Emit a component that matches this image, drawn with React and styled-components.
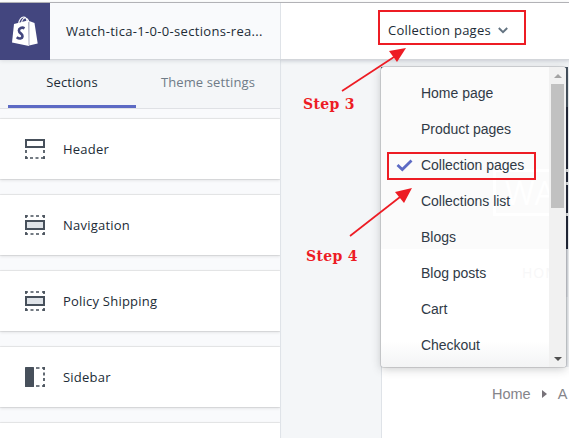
import React from "react";
import styled, { createGlobalStyle } from "styled-components";

const Global = createGlobalStyle`
  *, *::before, *::after { box-sizing: border-box; }
  body { margin: 0; background: #fff; overflow: hidden; }
`;

const Page = styled.div`
  position: relative;
  display: flex;
  flex-direction: column;
  width: 569px;
  height: 438px;
  overflow: hidden;
  background: #fff;
  color: #212b36;
  font-family: "Open Sans", "Noto Sans", sans-serif;
  font-size: 13px;
`;

const TopBar = styled.header`
  display: flex;
  flex: none;
  height: 60px;
  padding-top: 2px;
  position: relative;
  z-index: 1;
`;

const BarFill = styled.div`
  display: flex;
  width: 100%;
  border-top: 1px solid #b2b2b6;
  border-bottom: 1px solid #d3d6da;
  box-shadow: 0 1px 4px rgba(33, 43, 54, 0.12);
`;

const Brand = styled.div`
  width: 50px;
  height: 57px;
  margin-bottom: -1px;
  flex: none;
  background: #43467f;
  padding: 13px 0 0 12px;
  svg { display: block; }
`;

const ThemeName = styled.div`
  width: 231px;
  flex: none;
  padding-left: 16px;
  line-height: 56px;
  background: #f9fafc;
  border-right: 1px solid #dfe3e8;
  white-space: nowrap;
  letter-spacing: 0.32px;
`;

const PagePicker = styled.div`
  flex: 1;
  display: flex;
  align-items: center;
  padding: 0 0 2px 107px;
  gap: 7px;
  background: #fff;
  letter-spacing: 0.25px;
  white-space: nowrap;
`;

const Body = styled.div`
  display: flex;
  flex: 1;
  min-height: 0;
`;

const Sidebar = styled.aside`
  width: 281px;
  flex: none;
  border-right: 1px solid #dfe3e8;
  background: #f9fafc;
  overflow: hidden;
`;

const Tabs = styled.nav`
  display: flex;
  height: 49px;
  padding: 0 8px;
  background: #f4f6f8;
  border-bottom: 1px solid #dfe1e5;
`;

const Tab = styled.div`
  width: 128px;
  height: 48px;
  line-height: 44px;
  text-align: center;
  white-space: nowrap;
  color: ${(p) => (p.$active ? "#212b36" : "#6f7b87")};
  border-bottom: 3px solid ${(p) => (p.$active ? "#5c6ac4" : "transparent")};
  letter-spacing: 0.13px;
  padding-left: ${(p) => p.$shift || 0}px;
`;

const SectionList = styled.div`
  display: flex;
  flex-direction: column;
  gap: 16px;
  padding-top: 10px;
`;

const SectionCard = styled.div`
  display: flex;
  align-items: center;
  gap: 18px;
  flex: none;
  height: 60px;
  padding-left: 25px;
  background: #fff;
  box-shadow: 0 0 0 1px rgba(63, 63, 68, 0.09), 0 1px 3px rgba(63, 63, 68, 0.17);
  letter-spacing: 0.22px;
  white-space: nowrap;
`;

const Canvas = styled.main`
  flex: 1;
  padding-left: 100px;
  background: #f4f6f8;
  box-shadow: inset 0 4px 4px -3px #dfe3e8;
`;

const Preview = styled.div`
  display: flex;
  flex-direction: column;
  height: 100%;
  padding-top: 7px;
`;

const Hero = styled.div`
  display: flex;
  flex-direction: column;
  height: 182px;
  width: 187px;
  background: #1f2537;
`;

const HeroTop = styled.div`
  height: 40px;
  background: #485562;
`;

const HeroStripe = styled.div`
  height: 3px;
  margin-top: ${(p) => p.$gap}px;
  background: #e8e9eb;
`;

const NavBand = styled.div`
  height: 118px;
  width: 187px;
  background: #e8ebef;
  border-top: 48px solid #dcdfe5;
`;

const Breadcrumb = styled.div`
  display: flex;
  align-items: center;
  gap: 11px;
  flex: 1;
  padding: 0 0 18px 110px;
  border-left: 1px solid #dfe3e8;
  background: #fff;
  color: #85848a;
  font: 14.5px "Liberation Sans", sans-serif;
`;

const Menu = styled.div`
  position: absolute;
  z-index: 2;
  left: 381px;
  top: 67px;
  width: 185px;
  height: 300px;
  display: flex;
  overflow: hidden;
  border-radius: 3px;
  background: linear-gradient(#fbfbfb 182px, #fff 182px, #fff 274px, #f3f4f5);
`;

const MenuShadow = styled.div`
  position: absolute;
  left: 381px;
  top: 67px;
  width: 185px;
  height: 300px;
  border-radius: 3px;
  box-shadow: 0 0 0 1px rgba(39, 44, 48, 0.14), 0 2px 10px rgba(39, 44, 48, 0.25);
`;

const GhostLogo = styled.div`
  position: absolute;
  left: 112px;
  top: 102px;
  width: 100px;
  height: 47px;
  padding-left: 9px;
  border: 3px solid #fff;
  color: #fff;
  font: 32px/42px "Open Sans", sans-serif;
`;

const GhostNav = styled.div`
  position: absolute;
  left: 141px;
  top: 198px;
  color: #f7f7f8;
  font: 14px/16px "Open Sans", sans-serif;
  letter-spacing: 1px;
`;

const MenuItems = styled.div`
  position: relative;
  flex: 1;
  padding-top: 8px;
`;

const MenuItem = styled.div`
  display: flex;
  align-items: center;
  height: 36px;
  color: #303a46;
  font: 14px "Liberation Sans", sans-serif;
  letter-spacing: -0.02px;
  white-space: nowrap;
`;

const CheckSlot = styled.span`
  display: flex;
  width: 40px;
  padding-left: 15px;
`;

const Scrollbar = styled.div`
  position: relative;
  display: flex;
  flex-direction: column;
  justify-content: space-between;
  align-items: center;
  width: 17px;
  background: #f1f1f1;
`;

const Thumb = styled.div`
  width: 13px;
  height: 124px;
  margin-bottom: auto;
  background: #c1c1c1;
`;

const ScrollButton = styled.div`
  display: flex;
  align-items: center;
  justify-content: center;
  height: 17px;
`;

const Highlight = styled.div`
  position: absolute;
  z-index: 3;
  left: ${(p) => p.$x}px;
  top: ${(p) => p.$y}px;
  width: ${(p) => p.$w}px;
  height: ${(p) => p.$h}px;
  border: 2px solid #ed1c24;
`;

const Step = styled.div`
  position: absolute;
  z-index: 3;
  left: ${(p) => p.$x}px;
  top: ${(p) => p.$y}px;
  color: #ed1c24;
  font: bold 14px/18px "DejaVu Serif", serif;
  letter-spacing: 0.3px;
  white-space: nowrap;
`;

const Arrows = styled.svg`
  position: absolute;
  z-index: 3;
  left: 0;
  top: 0;
`;

function BagLogo() {
  return (
    <svg width="26" height="31" viewBox="0 0 26 31">
      <path d="M2 8L16.500 4.300L17 30L0 26.500Z" fill="#fff" />
      <path d="M17.200 5L22.500 7L25.700 27.500L17.200 29.500Z" fill="#fff" />
      <path d="M16.800 5V29.500" stroke="#b9b9cb" strokeWidth=".7" />
      <path d="M6.500 8C7 3.500 9.500 1 11.500 1C14 1 15 3.500 15 6M9.500 7C10 3.500 12 1.500 13.500 2C15.500 2.200 16.300 4 16.800 6" fill="none" stroke="#fff" strokeWidth="1.100" />
      <path d="M12.500 12.300C10 10.900 6.900 12 6.900 14.500C6.900 17.500 10.700 17.300 10.500 20.200C10.300 22.900 7.200 23.200 4.700 21.200" fill="none" stroke="#43467f" strokeWidth="2.600" />
    </svg>
  );
}

function SectionIcon({ kind }) {
  return (
    <svg width="20" height="20" viewBox="0 0 20 20" fill="none" stroke="#47505b" strokeWidth="2">
      {kind === "header" && (
        <>
          <path d="M1 1H19V8H1Z" />
          <path d="M1 11V14M19 11V14M1 17V20M19 17V20M0 19H3M5 19H8M10.500 19H13.500M16 19H20" strokeWidth="1.700" />
        </>
      )}
      {kind === "middle" && (
        <>
          <path d="M1 6H19V14H1Z" fill="#dfe3e8" />
          <path d="M0 1H3M5.500 1H8.500M11 1H14M17 1H20M1 0V3M19 0V3M0 19H3M5.500 19H8.500M11 19H14M17 19H20M1 17V20M19 17V20" strokeWidth="1.700" />
        </>
      )}
      {kind === "side" && (
        <>
          <rect x="0" y="0" width="9" height="20" rx=".5" fill="#47505b" stroke="none" />
          <path d="M11 1H14.500M17 1H20M11 19H14.500M17 19H20M19 0V3M19 5.500V8.500M19 11V14M19 17V20" strokeWidth="1.700" />
        </>
      )}
    </svg>
  );
}

const sections = [
  { name: "Header", icon: "header" },
  { name: "Navigation", icon: "middle" },
  { name: "Policy Shipping", icon: "middle" },
  { name: "Sidebar", icon: "side" },
];

const pages = ["Home page", "Product pages", "Collection pages", "Collections list", "Blogs", "Blog posts", "Cart", "Checkout"];

export default function App() {
  return (
    <Page>
      <Global />
      <TopBar>
        <BarFill>
          <Brand><BagLogo /></Brand>
          <ThemeName>Watch-tica-1-0-0-sections-rea...</ThemeName>
          <PagePicker>
            Collection pages
            <svg width="10" height="7" viewBox="0 0 10 7" fill="none" stroke="#637381" strokeWidth="1.900"><path d="M.8 1L5 5.200L9.200 1" /></svg>
          </PagePicker>
        </BarFill>
      </TopBar>
      <Body>
        <Sidebar>
          <Tabs>
            <Tab $active>Sections</Tab>
            <Tab $shift={16}>Theme settings</Tab>
          </Tabs>
          <SectionList>
            {sections.map((s) => (
              <SectionCard key={s.name}>
                <SectionIcon kind={s.icon} />
                {s.name}
              </SectionCard>
            ))}
            <SectionCard />
          </SectionList>
        </Sidebar>
        <Canvas>
          <Preview>
            <Hero>
              <HeroTop />
              <HeroStripe $gap={62} />
              <HeroStripe $gap={10} />
              <HeroStripe $gap={28} />
            </Hero>
            <NavBand />
            <Breadcrumb>
              Home
              <svg width="5" height="8" viewBox="0 0 5 8"><path d="M0 0L5 4L0 8Z" fill="#777279" /></svg>
              <span>A</span>
            </Breadcrumb>
          </Preview>
        </Canvas>
      </Body>
      <MenuShadow />
      <Menu>
        <GhostLogo>WA</GhostLogo>
        <GhostNav>HOME</GhostNav>
        <MenuItems>
          {pages.map((p) => (
            <MenuItem key={p}>
              <CheckSlot>
                {p === "Collection pages" && (
                  <svg width="17" height="13" viewBox="0 0 17 13" fill="none" stroke="#5c6ac4" strokeWidth="2.800"><path d="M1.500 6L6.300 10.500L15.500 1.500" /></svg>
                )}
              </CheckSlot>
              {p}
            </MenuItem>
          ))}
        </MenuItems>
        <Scrollbar>
          <ScrollButton><svg width="8" height="4" viewBox="0 0 8 4"><path d="M0 4L4 0L8 4Z" fill="#a3a3a3" /></svg></ScrollButton>
          <Thumb />
          <ScrollButton><svg width="8" height="4" viewBox="0 0 8 4"><path d="M0 0L4 4L8 0Z" fill="#505050" /></svg></ScrollButton>
        </Scrollbar>
      </Menu>
      <Highlight $x={378} $y={10} $w={148} $h={35} />
      <Highlight $x={387} $y={152} $w={149} $h={28} />
      <Step $x={303} $y={95}>Step 3</Step>
      <Step $x={306} $y={247}>Step 4</Step>
      <Arrows width="569" height="438">
        <g stroke="#ed1c24" strokeWidth="1.700" fill="none">
          <path d="M342 91L394 57" />
          <path d="M350 236L400 197" />
        </g>
        <g fill="#ed1c24">
          <path d="M406 48L389 51L397 62Z" />
          <path d="M412 188L395 192L404 203Z" />
        </g>
      </Arrows>
    </Page>
  );
}
